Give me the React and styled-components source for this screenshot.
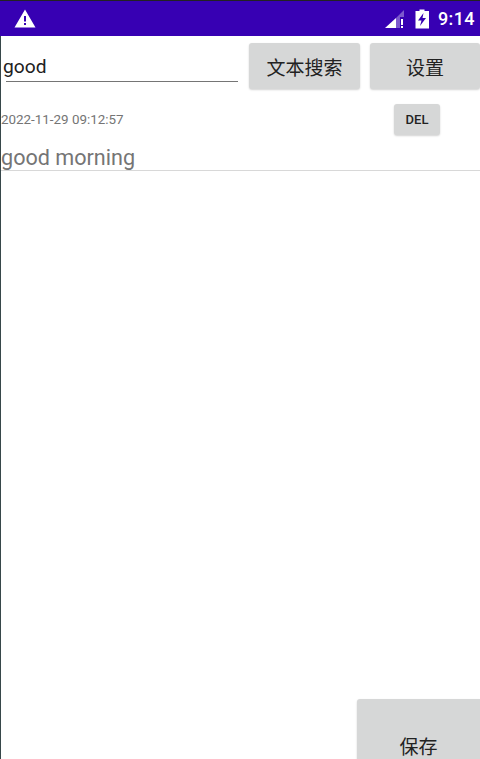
import React from 'react';
import styled, { createGlobalStyle } from 'styled-components';

const Global = createGlobalStyle`
  html, body { margin: 0; padding: 0; background: #fff; height: 759px; overflow: hidden; }
  #root { height: 759px; }
  * { box-sizing: border-box; }
`;
const CJK = `Roboto, "Noto Sans CJK SC", sans-serif`;

const Screen = styled.div`
  display: flex; flex-direction: column; width: 480px; height: 759px; overflow: hidden;
  font-family: ${CJK}; background: #fff;
`;
const StatusBar = styled.header`
  flex: none; height: 36px; background: #3700b3; border-top: 1px solid #222;
  display: flex; align-items: center; justify-content: space-between; padding: 0 5px 0 14px;
  color: #fff;
`;
const StatusRight = styled.div`display: flex; align-items: center;`;
const Clock = styled.span`font-size: 18px; font-weight: 500; letter-spacing: 0.4px; margin-left: 9px; line-height: 1;`;
const Body = styled.main`
  flex: 1; min-height: 0; display: flex; flex-direction: column; border-left: 1px solid #37474a;
`;
const SearchRow = styled.div`
  display: flex; align-items: flex-start; padding: 7px 0 0 5px; height: 68px; flex: none;
`;
const Field = styled.div`
  width: 232px; height: 39px; border-bottom: 1px solid #757575;
  font-size: 19.2px; line-height: 47px; color: #212121; text-indent: -3px;
`;
const Button = styled.button`
  border: 0; padding: 0; background: #d6d7d7; color: #222; border-radius: 3px;
  font-family: ${CJK}; display: flex; align-items: center; justify-content: center;
  box-shadow: 0 1px 2px rgba(0,0,0,.18);
`;
const TopButton = styled(Button)`
  height: 46px; width: ${p => p.$w}px; margin-left: ${p => p.$ml}px; font-size: 19px; flex: none;
`;
const MetaRow = styled.div`
  display: flex; align-items: center; justify-content: space-between; height: 31px; flex: none; padding-right: 40px;
`;
const Stamp = styled.span`font-size: 13.4px; color: #757575;`;
const DelButton = styled(Button)`width: 46px; height: 31px; font-size: 13px; font-weight: 500;`;
const Note = styled.div`
  flex: none; height: 36px; border-bottom: 1px solid #d8d8d8; font-size: 21.6px; line-height: 46px; color: #757575;
`;
const Spacer = styled.div`flex: 1;`;
const SaveButton = styled(Button)`
  flex: none; align-self: flex-end; width: 123px; height: 80px; margin-bottom: -20px; font-size: 19px;
  padding-top: 13px; border-radius: 3px 0 0 0;
`;

const Warning = () => (
  <svg width="22" height="20" viewBox="0 0 22 20" fill="#fff">
    <path fillRule="evenodd" d="M11 0.5 L21.5 18.5 H0.5 Z M10 7 V12.5 H12 V7 Z M10 14 V16 H12 V14 Z" />
  </svg>
);
const Signal = () => (
  <svg width="20" height="20" viewBox="0 0 20 20">
    <path d="M0 19 L11 9 V19 Z" fill="#fff" />
    <path d="M11 9 L19 1 V8 H15 V19 H11 Z" fill="#fff" fillOpacity=".35" />
    <rect x="16" y="10" width="2" height="6" fill="#fff" />
    <rect x="16" y="17" width="2" height="2" fill="#fff" />
  </svg>
);
const Battery = () => (
  <svg width="14" height="20" viewBox="0 0 14 20" style={{ marginLeft: 10 }}>
    <path fillRule="evenodd" fill="#fff" d="M4.5 0.5 H9.5 V2 H14 V19.5 H0.5 V2 H4.5 Z M8.5 4 L3 11.5 H6.5 L5 17 L11 9 H7.5 Z" />
  </svg>
);

export default function App() {
  return (
    <Screen>
      <Global />
      <StatusBar>
        <Warning />
        <StatusRight>
          <Signal />
          <Battery />
          <Clock>9:14</Clock>
        </StatusRight>
      </StatusBar>
      <Body>
        <SearchRow>
          <Field>good</Field>
          <TopButton $w={111} $ml={11}>文本搜索</TopButton>
          <TopButton $w={110} $ml={10}>设置</TopButton>
        </SearchRow>
        <MetaRow>
          <Stamp>2022-11-29 09:12:57</Stamp>
          <DelButton>DEL</DelButton>
        </MetaRow>
        <Note>good morning</Note>
        <Spacer />
        <SaveButton>保存</SaveButton>
      </Body>
    </Screen>
  );
}
